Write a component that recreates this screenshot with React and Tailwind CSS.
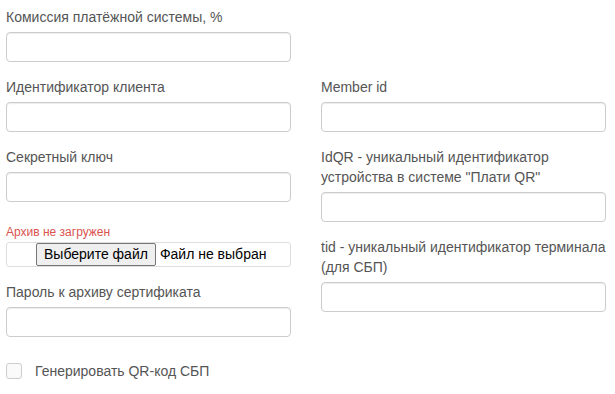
import React from "react"

const font = { fontFamily: '"Liberation Sans", Arial, sans-serif' }

function Field({ label, className = "" }) {
  return (
    <div className={"mb-[15px] " + className}>
      <label className="block mb-[5px] text-[14px] leading-[20px] text-[#555]">{label}</label>
      <div className="h-[30px] w-full rounded-[4px] border border-[#ccc] bg-white shadow-[inset_0_1px_1px_rgba(0,0,0,0.075)]" />
    </div>
  )
}

export default function App() {
  return (
    <div className="min-h-screen bg-white pt-[7px] px-[6px]" style={font}>
      <div className="grid grid-cols-[285px_285px] gap-x-[30px]">
        <Field label="Комиссия платёжной системы, %" />
        <div />

        {/* left column */}
        <div>
          <Field label="Идентификатор клиента" />
          <Field label="Секретный ключ" />

          <div className="mb-[15px] pt-[5px]">
            <div className="text-[12px] leading-[20px] text-[#d9534f]">Архив не загружен</div>
            <div className="flex h-[25px] items-center rounded-[3px] border border-[#ddd] bg-white pl-[29px] text-[14px]">
              <div className="flex h-[23px] items-center rounded-[2px] border border-[#767676] bg-[#efefef] px-[7px] text-[14px] text-black">
                Выберите файл
              </div>
              <span className="ml-[4px] text-black">Файл не выбран</span>
            </div>
          </div>

          <Field label="Пароль к архиву сертификата" />

          <label className="mt-[24px] flex items-center text-[14px] leading-[20px] text-[#555]">
            <span className="h-[16px] w-[16px] rounded-[3px] border border-[#ccc] bg-[#fafafa]" />
            <span className="ml-[13px]">Генерировать QR-код СБП</span>
          </label>
        </div>

        {/* right column */}
        <div>
          <Field label="Member id" />
          <Field label={<>IdQR - уникальный идентификатор<br />устройства в системе "Плати QR"</>} />
          <Field label={<>tid - уникальный идентификатор терминала<br />(для СБП)</>} />
        </div>
      </div>
    </div>
  )
}
